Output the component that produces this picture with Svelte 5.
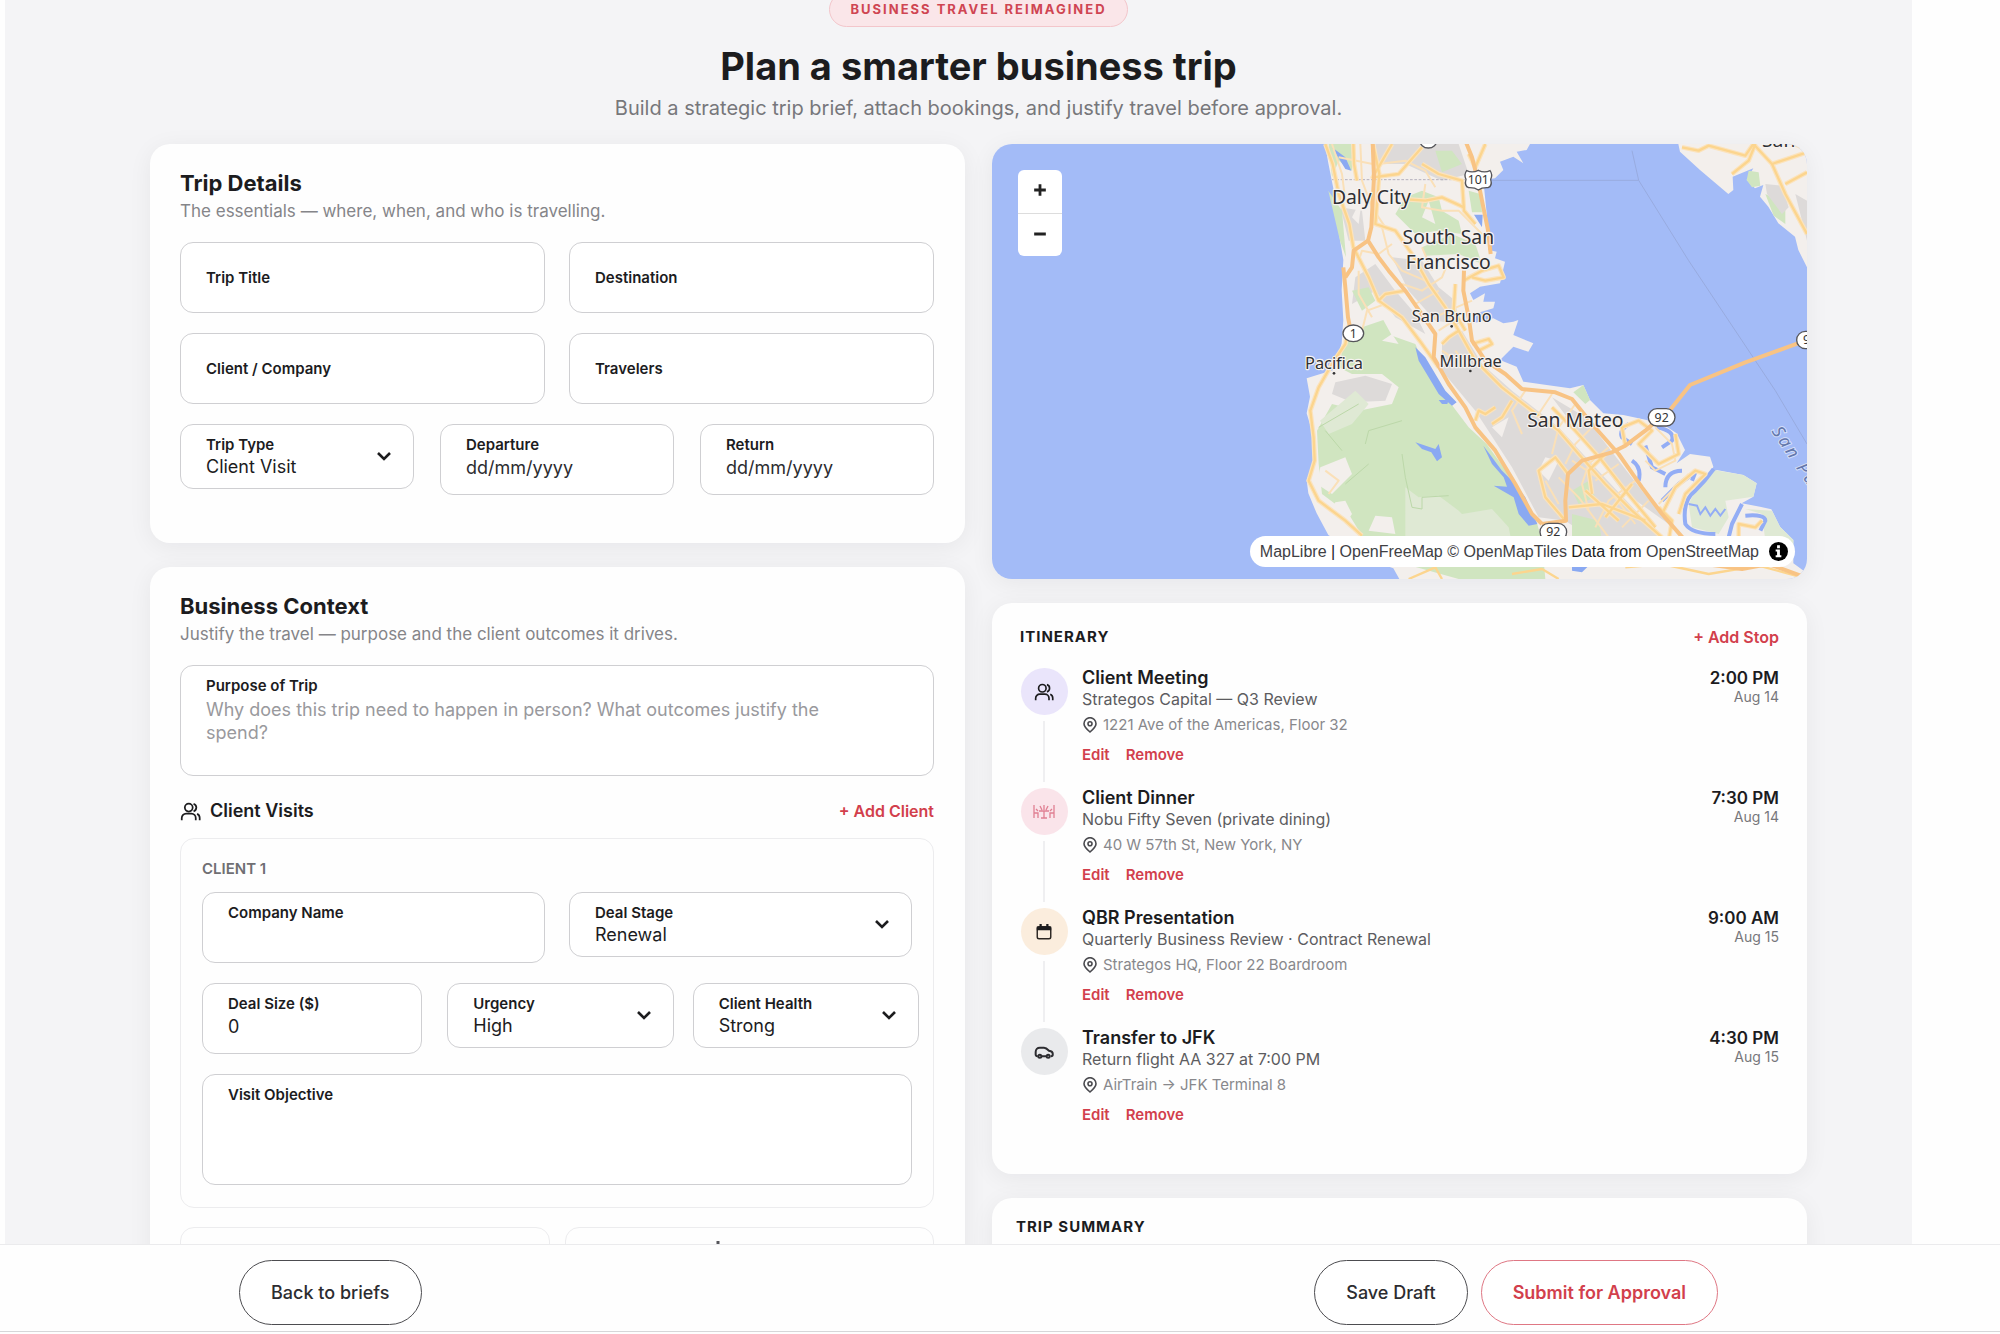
<script>
  let trip = {
    title: "",
    destination: "",
    company: "",
    travelers: "",
    type: "Client Visit",
    departure: "",
    returning: "",
    purpose: "",
  };

  let client = {
    name: "",
    stage: "Renewal",
    size: "0",
    urgency: "High",
    health: "Strong",
    objective: "",
  };

  const basics = [
    { key: "title", label: "Trip Title" },
    { key: "destination", label: "Destination" },
    { key: "company", label: "Client / Company" },
    { key: "travelers", label: "Travelers" },
  ];

  let stops = [
    {
      icon: "people",
      title: "Client Meeting",
      detail: "Strategos Capital — Q3 Review",
      place: "1221 Ave of the Americas, Floor 32",
      time: "2:00 PM",
      date: "Aug 14",
    },
    {
      icon: "dinner",
      title: "Client Dinner",
      detail: "Nobu Fifty Seven (private dining)",
      place: "40 W 57th St, New York, NY",
      time: "7:30 PM",
      date: "Aug 14",
    },
    {
      icon: "calendar",
      title: "QBR Presentation",
      detail: "Quarterly Business Review · Contract Renewal",
      place: "Strategos HQ, Floor 22 Boardroom",
      time: "9:00 AM",
      date: "Aug 15",
    },
    {
      icon: "car",
      title: "Transfer to JFK",
      detail: "Return flight AA 327 at 7:00 PM",
      place: "AirTrain → JFK Terminal 8",
      time: "4:30 PM",
      date: "Aug 15",
    },
  ];

  const removeStop = (stop) => {
    stops = stops.filter((s) => s !== stop);
  };

  // Roads, grouped by weight
  const highways = [
    "M1422 -5 L1440 40 L1458 110 L1474 190 L1488 258 L1496 330",
    "M1142 -5 L1146 100 L1138 250 L1128 290 L1160 340 L1190 380 L1240 440 L1275 490 L1330 570 L1325 640 L1370 720 L1420 790 L1450 850 L1510 920 L1570 1020 L1620 1110 L1650 1140",
    "M1416 380 L1414 440 L1430 520 L1440 590 L1480 650 L1540 690 L1590 735 L1690 745 L1740 765 L1800 840 L1880 930 L1950 1030 L2010 1110 L2080 1190",
    "M1054 370 L1060 430 L1068 520 L1076 560",
    "M1650 1140 L1722 1130 L1720 1070 L1728 990 L1770 950 L1860 925 L1900 905 L1960 860 L2000 825",
    "M2034 798 L2094 723 L2260 655 L2440 590",
    "M1128 290 L1085 320 L1080 370 L1060 400",
  ];
  const mainRoads = [
    "M1000 0 L1022 60 L1040 150 L1072 240 L1084 310 L1130 400 L1160 470 L1230 520 L1290 600 L1340 670",
    "M1084 0 L1086 60 L1095 110",
    "M1200 0 L1142 100 L1220 90 L1290 10",
    "M1142 -5 L1162 90 L1150 240 L1210 260 L1260 330 L1310 420 L1360 490 L1400 560 L1450 650 L1530 730 L1620 800 L1700 860 L1760 930 L1840 1020 L1920 1100 L2010 1180",
    "M1290 60 L1340 90 L1410 110 L1416 200 L1450 240",
    "M1480 0 L1450 70 L1430 30",
    "M1230 165 L1300 170 L1350 160 L1416 190",
    "M1070 545 L1060 600 L1020 660 L980 730 L955 800 L965 880 L968 950 L950 1010 L980 1070 L1060 1130 L1110 1175",
    "M1240 440 L1180 450 L1160 470",
    "M1350 600 L1370 580 L1400 560",
    "M1390 420 L1385 500 L1420 560",
    "M1440 600 L1490 585 L1500 600 L1460 620",
    "M1414 410 L1470 380 L1520 365 L1535 400 L1480 410 L1440 400",
    "M1680 790 L1750 860 L1830 950 L1900 1040 L1990 1150",
    "M1510 790 L1480 810 L1460 800 L1450 830",
    "M1560 770 L1530 820 L1500 840",
    "M1728 990 L1690 940 L1640 980 L1660 1060 L1720 1130",
    "M1800 1050 L1790 980 L1840 930",
    "M1840 1120 L1920 1020 M1780 1040 L1880 1130 M1730 1090 L1830 1080 L1960 1130",
    "M1900 905 L1890 850 L1940 830 L1980 860 L1940 900 L2000 960 L2060 930 L2050 870",
    "M2010 1110 L2050 1030 L2110 980 L2140 990 L2080 1050 L2060 1110",
    "M2030 1190 L2040 1130 L2000 1090",
    "M2240 1180 L2240 1140 L2290 1150 L2310 1130",
  ];
  const eastRoads = [
    "M2070 10 L2120 20 L2150 5 L2260 35 L2284 0 L2340 60 L2380 150 L2445 270",
    "M2290 0 L2270 50 L2220 90",
    "M2340 60 L2445 25 M2380 120 L2445 85 M2400 -5 L2430 10",
  ];
  const streets = [
    "M1040 40 L1142 60 M1020 0 L1050 90 L1060 170 M1105 0 L1110 110 L1140 190 L1180 250",
    "M1160 60 L1240 50 L1300 80 L1330 130 M1300 120 L1290 190 L1350 200 M1350 200 L1400 200 L1470 270",
    "M1170 250 L1190 330 L1230 380 L1300 410 M1200 300 L1160 330 L1110 320 L1100 350 M1100 380 L1100 450 L1140 520",
    "M1230 420 L1290 440 L1350 400 L1370 350 M1270 480 L1340 440 M1310 530 L1370 500 L1440 470 M1320 380 L1290 310",
    "M1400 520 L1340 560 M1380 640 L1350 620 M1420 660 L1390 620 M1110 560 L1125 500 L1180 480",
    "M1600 740 L1560 800 L1590 870 M1680 750 L1640 810 M1750 780 L1700 850 L1680 930 M1800 850 L1750 900 L1720 960",
    "M1850 910 L1790 960 L1770 1020 L1790 1100 M1880 960 L1810 1010 M1930 1010 L1850 1070 L1810 1150 M1970 1070 L1890 1150",
    "M1700 1000 L1760 1060 L1850 1180 M1660 1010 L1700 1080 M1740 950 L1830 1010 L1930 1140",
    "M1990 850 L2040 900 L2050 950 L1990 980 L1960 950 M2000 1080 L2090 990 M1000 980 L1040 1010 L1010 1050",
  ];
</script>

{#snippet chevron()}
  <svg class="chevron" viewBox="0 0 16 16" aria-hidden="true">
    <path d="M2 5 L8 11 L14 5" fill="none" stroke="#1c1c1e" stroke-width="2.6" />
  </svg>
{/snippet}

{#snippet people()}
  <svg viewBox="0 0 24 24" aria-hidden="true" fill="none" stroke="currentColor" stroke-width="2">
    <circle cx="10" cy="7.500" r="4.500" />
    <path d="M2 22v-2.500a5 5 0 0 1 5-5h6a5 5 0 0 1 5 5V22" />
    <path d="M15.500 3.200a4.500 4.500 0 0 1 0 8.600M19.500 14.700a5 5 0 0 1 3 4.500V22" />
  </svg>
{/snippet}

<div class="app">
  <main>
    <header class="hero">
      <span class="badge">BUSINESS TRAVEL REIMAGINED</span>
      <h1>Plan a smarter business trip</h1>
      <p>Build a strategic trip brief, attach bookings, and justify travel before approval.</p>
    </header>

    <div class="columns">
      <!-- Left column: the brief -->
      <div class="column">
        <section class="card details">
          <h2>Trip Details</h2>
          <p class="lead">The essentials — where, when, and who is travelling.</p>

          <div class="row two">
            {#each basics as item}
              <div class="field inline">
                <label for={item.key}>{item.label}</label>
                <input id={item.key} type="text" bind:value={trip[item.key]} />
              </div>
            {/each}
          </div>

          <div class="row three">
            <div class="field pick">
              <label for="type">Trip Type</label>
              <select id="type" bind:value={trip.type}>
                <option>Client Visit</option>
                <option>Conference</option>
              </select>
              {@render chevron()}
            </div>
            <div class="field">
              <label for="departure">Departure</label>
              <input id="departure" type="text" placeholder="dd/mm/yyyy" bind:value={trip.departure} />
            </div>
            <div class="field">
              <label for="return">Return</label>
              <input id="return" type="text" placeholder="dd/mm/yyyy" bind:value={trip.returning} />
            </div>
          </div>
        </section>

        <section class="card">
          <h2>Business Context</h2>
          <p class="lead">Justify the travel — purpose and the client outcomes it drives.</p>

          <div class="field area">
            <label for="purpose">Purpose of Trip</label>
            <textarea
              id="purpose"
              placeholder="Why does this trip need to happen in person? What outcomes justify the spend?"
              bind:value={trip.purpose}
            ></textarea>
          </div>

          <div class="visits-head">
            <h3>{@render people()} Client Visits</h3>
            <button class="link" type="button">+ Add Client</button>
          </div>

          <div class="client">
            <h4>CLIENT 1</h4>
            <div class="row two">
              <div class="field">
                <label for="name">Company Name</label>
                <input id="name" type="text" bind:value={client.name} />
              </div>
              <div class="field pick">
                <label for="stage">Deal Stage</label>
                <select id="stage" bind:value={client.stage}>
                  <option>Renewal</option>
                  <option>Discovery</option>
                </select>
                {@render chevron()}
              </div>
            </div>
            <div class="row deal">
              <div class="field">
                <label for="size">Deal Size ($)</label>
                <input id="size" type="text" inputmode="numeric" bind:value={client.size} />
              </div>
              <div class="field pick">
                <label for="urgency">Urgency</label>
                <select id="urgency" bind:value={client.urgency}>
                  <option>High</option>
                  <option>Low</option>
                </select>
                {@render chevron()}
              </div>
              <div class="field pick">
                <label for="health">Client Health</label>
                <select id="health" bind:value={client.health}>
                  <option>Strong</option>
                  <option>At Risk</option>
                </select>
                {@render chevron()}
              </div>
            </div>
            <div class="field area">
              <label for="objective">Visit Objective</label>
              <textarea id="objective" bind:value={client.objective}></textarea>
            </div>
          </div>

          <div class="stats">
            <div class="stat"></div>
            <div class="stat">
              <svg viewBox="0 0 24 24" aria-hidden="true" fill="none" stroke="#55555a" stroke-width="3">
                <path d="M12 0v24M18 6H9a4 4 0 0 0 0 7h6a4 4 0 0 1 0 7H6" />
              </svg>
            </div>
          </div>
        </section>
      </div>

      <!-- Right column: map, stops and summary -->
      <div class="column">
        <section class="map" aria-label="Map">
          <svg class="tiles" viewBox="0 0 2445 1305" preserveAspectRatio="xMidYMid slice">
            <rect width="2445" height="1305" fill="#a3bbf7" />

            <!-- Peninsula -->
            <path
              fill="#f3efec"
              d="M999 0 L1009 58 L1029 158 L1044 288 L1054 348 L1049 438 L1054 528 L1049 598 L1024 678 L985 690 L944 703 L954 758 L944 808 L959 858 L964 958 L944 1008 L949 1048 L974 1108 L1009 1173 L1110 1240 L1204 1273 L1222 1305 L2445 1305 L2439 1283 L2404 1258 L2404 1188 L2364 1148 L2344 1108 L2338 1096 L2304 1088 L2249 1078 L2284 1058 L2294 1018 L2254 993 L2174 978 L2154 998 L2164 968 L2154 938 L2094 930 L2054 958 L2079 918 L2054 868 L2024 848 L1964 828 L1894 813 L1834 808 L1794 768 L1774 723 L1734 733 L1664 723 L1594 713 L1574 668 L1524 648 L1564 608 L1609 623 L1624 598 L1564 573 L1579 528 L1564 533 L1534 538 L1504 523 L1444 538 L1454 508 L1504 493 L1509 473 L1474 473 L1479 448 L1444 468 L1434 448 L1464 428 L1524 418 L1539 353 L1509 343 L1514 323 L1489 318 L1489 258 L1484 208 L1474 108 L1509 103 L1534 78 L1524 53 L1564 38 L1594 58 L1574 23 L1604 18 L1614 0 Z"
            />
            <!-- Built-up areas -->
            <path
              fill="#dddad9"
              d="M1150 0 L1400 0 L1430 90 L1350 110 L1240 60 L1160 60 Z M1045 190 L1110 200 L1120 290 L1070 290 Z M1090 400 L1150 360 L1210 440 L1270 510 L1300 570 L1210 520 L1150 440 L1080 480 Z M1200 340 L1290 350 L1340 430 L1390 470 L1400 540 L1330 530 L1250 440 Z M1350 590 L1410 560 L1470 660 L1560 740 L1700 850 L1800 960 L1950 1120 L2010 1190 L1810 1190 L1720 1130 L1640 1120 L1560 970 L1450 800 L1350 680 Z M1030 715 L1120 695 L1200 720 L1180 770 L1080 775 L1020 750 Z M1680 760 L1780 820 L1950 1040 L2030 1140 L1890 1040 Z"
            />
            <!-- Parks and hills -->
            <path
              fill="#d0e5c0"
              d="M1055 600 L1110 550 L1174 528 L1200 575 L1270 600 L1300 670 L1370 770 L1430 850 L1484 900 L1564 1010 L1630 1120 L1650 1190 L1660 1305 L1400 1305 L1204 1250 L1110 1175 L1070 1110 L990 1050 L980 960 L975 860 L1020 780 L1100 800 L1200 780 L1220 730 L1170 690 L1080 690 L1040 670 Z M1240 160 L1290 140 L1340 160 L1350 200 L1400 230 L1410 270 L1340 260 L1270 270 L1210 210 Z M1380 270 L1450 300 L1470 360 L1400 330 L1300 335 L1290 310 Z M1330 20 L1380 20 L1410 60 L1350 85 Z M1080 440 L1130 430 L1150 470 L1110 500 Z M1430 140 L1465 150 L1470 205 L1440 205 Z M1010 0 L1080 0 L1080 80 L1040 50 L1020 100 Z M1740 1040 L1790 1010 L1810 1060 L1760 1080 Z M1740 1110 L1820 1130 L1830 1190 L1740 1190 Z M1744 745 L1774 723 L1794 768 L1780 780 Z M1009 140 L1050 200 L1062 340 L1044 290 Z"
            />
            <path
              fill="#dfe9d4"
              d="M1240 1030 L1280 1060 L1340 1055 L1400 1100 L1410 1110 L1500 1095 L1550 1150 L1560 1200 L1240 1200 Z M984 830 L1090 740 L1130 780 L1080 840 L1010 870 Z M2090 1080 L2120 1020 L2165 978 L2254 993 L2294 1018 L2284 1058 L2200 1070 L2210 1120 L2180 1170 L2100 1150 Z M2260 1095 L2340 1100 L2364 1148 L2404 1188 L2404 1240 L2320 1190 L2310 1110 Z"
            />
            <path
              fill="#f3efec"
              d="M985 970 L1060 940 L1080 990 L1020 1050 L975 1020 Z M1030 1075 L1060 1070 L1080 1110 L1060 1140 L1010 1110 Z M1170 590 L1220 600 L1200 570 Z M1500 850 L1550 820 L1530 880 Z M1150 1115 L1200 1120 L1210 1170 L1130 1160 Z M1310 170 L1330 240 L1290 220 Z M1110 160 L1100 240 L1080 220 Z M1660 940 L1700 950 L1670 1010 L1640 980 Z"
            />
            <path fill="none" stroke="#bcd8a9" stroke-width="3" d="M980 850 L1100 780 M1120 900 L1130 860 L1230 830 M1000 860 L1050 920 M1060 1020 L1130 960 M1230 930 L1240 1000 L1260 1090 L1290 1095 L1290 1060 L1370 1055" />

            <!-- Lakes, sloughs and creeks -->
            <path
              fill="#8aa9f2"
              d="M1270 610 L1300 640 L1330 690 L1360 740 L1394 775 L1380 785 L1340 750 L1310 700 L1280 650 Z M1270 895 L1330 915 L1340 900 L1350 940 L1335 952 L1318 925 L1290 915 Z M1474 905 L1500 940 L1530 980 L1570 1020 L1600 1060 L1636 1140 L1610 1145 L1580 1110 L1565 1060 L1505 1025 L1545 1028 L1535 1000 L1500 960 Z M1020 10 L1060 40 L1078 80 L1060 75 Z M1446 212 L1472 212 L1470 250 Z M1340 768 L1370 768 L1366 780 L1350 780 Z M1740 1260 L1790 1265 L1770 1285 L1740 1280 Z"
            />
            <path
              fill="none"
              stroke="#93adf5"
              stroke-width="12"
              stroke-linejoin="round"
              d="M1910 840 Q1880 860 1890 880 L1920 900 M1994 850 Q2050 860 2040 890 L2010 910 M1960 905 L1980 970 L2020 990 M1920 950 Q1950 970 1940 1010 M2070 980 Q2020 980 2020 1030 M2010 1070 L2060 1020 L2110 985 L2100 1010 M2165 975 Q2140 1010 2110 1040 Q2070 1070 2080 1140 Q2100 1170 2170 1170 M2250 1080 L2220 1140 L2210 1180 M2260 1115 Q2320 1110 2320 1130 L2305 1160"
            />
            <path fill="none" stroke="#93adf5" stroke-width="6" d="M2090 1080 L2115 1085 L2125 1110 L2140 1090 L2155 1115 L2170 1095 L2185 1115 L2200 1095" />

            <!-- East shore -->
            <path
              fill="#f3efec"
              d="M2059 0 L2064 23 L2124 78 L2209 150 L2224 138 L2222 98 L2284 73 L2264 108 L2289 133 L2314 123 L2304 158 L2329 188 L2359 238 L2409 278 L2419 318 L2445 370 L2445 0 Z"
            />
            <path fill="#d0e5c0" d="M2270 80 L2300 85 L2305 125 L2280 130 L2264 108 Z M2320 150 L2380 180 L2380 240 L2345 215 Z" />
            <path fill="#dddad9" d="M2320 120 L2370 125 L2390 190 L2370 210 L2325 150 Z M2410 150 L2445 170 L2445 290 Z" />

            <path class="boundary dashed" d="M1020 107 H1430" />
            <path class="boundary" d="M1500 109 H1940 L1920 20 M1940 109 L2090 350 L2250 590 L2350 740 L2445 900" />

            {#each streets as road}
              <path class="street" d={road} />
            {/each}
            {#each mainRoads.concat(eastRoads) as road}
              <path class="casing" d={road} />
            {/each}
            {#each mainRoads.concat(eastRoads) as road}
              <path class="road" d={road} />
            {/each}
            {#each highways as road}
              <path class="highway" d={road} />
            {/each}
            <path class="road" d="M1250 1305 L1330 1270 L1350 1305 M1560 1290 L1650 1275 L1700 1305 M1900 1270 L2010 1260 L2150 1290 L2300 1265 L2430 1300" />
            <path class="highway" d="M2140 1260 L2250 1275 L2330 1260 L2440 1300" />

            <!-- Route shields -->
            <g class="shield">
              <path d="M1424 80 Q1441 88 1459 79 Q1477 88 1494 80 Q1503 92 1496 106 Q1502 126 1488 131 Q1470 130 1459 138 Q1448 130 1430 131 Q1416 126 1422 106 Q1415 92 1424 80 Z" />
              <ellipse cx="1309" cy="-12" rx="26" ry="24" />
              <ellipse cx="1084" cy="568" rx="31" ry="25" />
              <rect x="1969" y="794" width="80" height="52" rx="26" />
              <rect x="1644" y="1138" width="80" height="52" rx="26" />
              <rect x="2414" y="562" width="80" height="52" rx="26" />
              <text x="1459" y="119">101</text>
              <text x="1084" y="581">1</text>
              <text x="2009" y="833">92</text>
              <text x="1684" y="1177">92</text>
              <text x="2454" y="601">92</text>
            </g>

            <!-- Places -->
            <g class="city">
              <text x="1138" y="180">Daly City</text>
              <text x="1369" y="300">South San</text>
              <text x="1369" y="375">Francisco</text>
              <text x="1750" y="850">San Mateo</text>
              <text x="2360" y="8">San</text>
            </g>
            <g class="town">
              <text x="1379" y="534">San Bruno</text>
              <text x="1436" y="670">Millbrae</text>
              <text x="1026" y="675">Pacifica</text>
            </g>
            <g fill="#333">
              <circle cx="1379" cy="547" r="4" />
              <circle cx="1435" cy="681" r="4" />
              <circle cx="1026" cy="688" r="4" />
            </g>
            <text class="bay" transform="translate(2338 862) rotate(56)">San Pablo</text>
          </svg>

          <div class="zoom">
            <button type="button" aria-label="Zoom in">
              <svg viewBox="0 0 12 12" aria-hidden="true"><path d="M6 1v10M1 6h10" /></svg>
            </button>
            <button type="button" aria-label="Zoom out">
              <svg viewBox="0 0 12 12" aria-hidden="true"><path d="M1 6h10" /></svg>
            </button>
          </div>

          <div class="attribution">
            <span>
              <a href="#maplibre">MapLibre</a> | <a href="#openfreemap">OpenFreeMap</a>
              <a href="#openmaptiles">© OpenMapTiles</a> Data from
              <a href="#openstreetmap">OpenStreetMap</a>
            </span>
            <svg viewBox="0 0 20 20" aria-hidden="true">
              <circle cx="10" cy="10" r="10" />
              <path fill="#fff" d="M8.500 3.500h3v3h-3zM7 8h4.500v6H13v2H7v-2h1.500v-4H7z" />
            </svg>
          </div>
        </section>

        <section class="card itinerary">
          <div class="itinerary-head">
            <h2 class="caps">ITINERARY</h2>
            <button class="link" type="button">+ Add Stop</button>
          </div>

          <ol>
            {#each stops as stop, index}
              <li>
                <div class="rail">
                  <span class="dot {stop.icon}">
                    {#if stop.icon === "people"}
                      {@render people()}
                    {:else if stop.icon === "dinner"}
                      <svg class="wide" viewBox="0 0 22 14" aria-hidden="true" fill="none" stroke="#e07f92" stroke-width="1.3">
                        <path d="M1 0v13M1 8h4v5M21 0v13M21 8h-4v5M11 6v7M8 13h6M6 6h10M7 1l2 4M11 0v5M15 1l-2 4M3 4l2 2M19 4l-2 2" />
                      </svg>
                    {:else if stop.icon === "calendar"}
                      <svg viewBox="0 0 20 20" aria-hidden="true">
                        <rect x="2.500" y="4" width="15" height="13.500" rx="2" fill="none" stroke="#2c2622" stroke-width="1.600" />
                        <path fill="#1c1c1e" d="M2 4h16v4H2zM5 1h2.500v4H5zM12.500 1H15v4h-2.500z" />
                      </svg>
                    {:else}
                      <svg viewBox="0 0 24 24" aria-hidden="true" fill="none" stroke="#2c2c30" stroke-width="2.400">
                        <path d="M4.500 17H4a2 2 0 0 1-2-2v-3c0-3 2-5 5-5h5c2.500 0 4 1.500 6 3.500 3 .5 4.500 1.500 4.500 3.500v1a2 2 0 0 1-2 2H20M9.500 17h5" />
                        <circle cx="7" cy="17" r="1.800" />
                        <circle cx="17" cy="17" r="1.800" />
                      </svg>
                    {/if}
                  </span>
                  {#if index < stops.length - 1}
                    <span class="line"></span>
                  {/if}
                </div>

                <div class="body">
                  <h3>{stop.title}</h3>
                  <p class="detail">{stop.detail}</p>
                  <p class="place">
                    <svg viewBox="0 0 14 16" aria-hidden="true" fill="none" stroke="#4a4a4f" stroke-width="1.600">
                      <path d="M7 15C3.500 12 1 9.500 1 6.700a6 6 0 0 1 12 0C13 9.500 10.500 12 7 15z" />
                      <circle cx="7" cy="6.700" r="2" />
                    </svg>
                    {stop.place}
                  </p>
                  <div class="actions">
                    <button class="link" type="button">Edit</button>
                    <button class="link" type="button" on:click={() => removeStop(stop)}>Remove</button>
                  </div>
                </div>

                <div class="when">
                  <strong>{stop.time}</strong>
                  <span>{stop.date}</span>
                </div>
              </li>
            {/each}
          </ol>
        </section>

        <section class="card summary">
          <h2 class="caps">TRIP SUMMARY</h2>
        </section>
      </div>
    </div>
  </main>

  <footer>
    <button class="pill" type="button">Back to briefs</button>
    <div class="right">
      <button class="pill" type="button">Save Draft</button>
      <button class="pill primary" type="button">Submit for Approval</button>
    </div>
  </footer>
</div>

<style>
  :global(body) {
    background: #fefefe;
  }

  * {
    box-sizing: border-box;
  }

  .app {
    display: flex;
    flex-direction: column;
    height: 100vh;
    padding-bottom: 2px;
    color: #1c1c1e;
    font-family: Inter, "Liberation Sans", sans-serif;
  }

  h1,
  h2,
  h3,
  h4,
  p,
  ol {
    margin: 0;
    padding: 0;
  }

  button,
  input,
  select,
  textarea {
    font-family: inherit;
    color: inherit;
  }

  main {
    flex: 1;
    min-height: 0;
    overflow: hidden;
    margin: 0 88px 0 5px;
    padding: 0 105px 0 145px;
    background: #f4f4f6;
  }

  /* Hero */
  .hero {
    display: flex;
    flex-direction: column;
    align-items: center;
    margin-top: -8px;
    height: 152px;
  }

  .badge {
    padding: 0 20px;
    border: 1px solid #f3c6cb;
    border-radius: 18px;
    background: #fae6e9;
    color: #cf4552;
    font-size: 13px;
    font-weight: 700;
    line-height: 33px;
    letter-spacing: 2px;
  }

  h1 {
    margin-top: 15px;
    font-size: 38px;
    font-weight: 700;
    line-height: 48px;
  }

  .hero p {
    margin-top: 4px;
    color: #77777b;
    font-size: 20px;
    line-height: 28px;
  }

  .columns {
    display: grid;
    grid-template-columns: 1fr 1fr;
    align-items: start;
    gap: 27px;
  }

  .column {
    display: grid;
    gap: 24px;
  }

  .card {
    padding: 26px 31px 48px 30px;
    border-radius: 20px;
    background: #fefefe;
    box-shadow: 0 4px 24px rgba(20, 20, 40, 0.06);
  }

  h2 {
    font-size: 22px;
    font-weight: 700;
    line-height: 26px;
  }

  .lead {
    margin: 4px 0 20px;
    color: #858589;
    font-size: 17px;
    line-height: 22px;
  }

  /* Form fields */
  .row {
    display: grid;
    align-items: start;
    gap: 20px 24px;
    margin-bottom: 20px;
  }

  .two {
    grid-template-columns: 1fr 1fr;
  }

  .three {
    grid-template-columns: 1fr 1fr 1fr;
    column-gap: 26px;
    margin-bottom: 0;
  }

  .deal {
    grid-template-columns: 1fr 1fr 1fr;
    column-gap: 19px;
    margin-right: -7px;
  }

  .deal .field:first-child {
    margin-right: 6px;
  }

  .field {
    position: relative;
    display: flex;
    flex-direction: column;
    height: 71px;
    padding: 10px 25px;
    border: 1px solid #cfcfd2;
    border-radius: 13px;
    background: #fff;
  }

  .inline {
    flex-direction: row;
    align-items: center;
    gap: 12px;
  }

  .pick {
    height: 65px;
  }

  .area {
    height: 111px;
  }

  label {
    font-size: 15px;
    font-weight: 600;
    line-height: 20px;
  }

  input,
  select,
  textarea {
    width: 100%;
    min-width: 0;
    padding: 0;
    border: 0;
    outline: 0;
    background: none;
    font-size: 18px;
    line-height: 23px;
    appearance: none;
    resize: none;
  }

  input {
    flex: 1;
  }

  .field:not(.inline) input {
    flex: none;
    height: 24px;
  }

  textarea {
    flex: 1;
    overflow: hidden;
    padding: 2px 40px 0 0;
  }

  input::placeholder {
    color: #2c2c30;
    opacity: 1;
  }

  textarea::placeholder {
    color: #99999d;
    opacity: 1;
  }

  .chevron {
    position: absolute;
    top: 23px;
    right: 21px;
    width: 16px;
    height: 16px;
    pointer-events: none;
  }

  .link {
    padding: 0;
    border: 0;
    background: none;
    color: #d23f4c;
    font-size: 16px;
    font-weight: 600;
    line-height: 20px;
    cursor: pointer;
  }

  .visits-head,
  .itinerary-head {
    display: flex;
    align-items: center;
    justify-content: space-between;
  }

  .visits-head {
    margin: 23px 0 15px;
  }

  .visits-head h3 {
    display: flex;
    align-items: center;
    gap: 9px;
    font-size: 18px;
    font-weight: 600;
    line-height: 24px;
  }

  .visits-head svg {
    width: 21px;
    height: 21px;
  }

  .client {
    padding: 20px 21px 22px;
    border: 1px solid #ececee;
    border-radius: 14px;
  }

  .client h4 {
    margin-bottom: 13px;
    color: #6f6f73;
    font-size: 15px;
    font-weight: 600;
    line-height: 20px;
  }

  .stats {
    display: grid;
    grid-template-columns: 1fr 1fr;
    gap: 15px;
    margin-top: 19px;
  }

  .stat {
    height: 100px;
    padding: 13px 140px;
    border: 1px solid #ececee;
    border-radius: 14px;
  }

  .stat svg {
    width: 24px;
    height: 24px;
  }

  /* Map */
  .map {
    position: relative;
    overflow: hidden;
    height: 435px;
    border-radius: 20px;
    box-shadow: 0 4px 24px rgba(20, 20, 40, 0.06);
  }

  .tiles {
    display: block;
    width: 100%;
    height: 100%;
    font-family: "Noto Sans", sans-serif;
    text-anchor: middle;
  }

  .street,
  .casing,
  .road,
  .highway,
  .boundary {
    fill: none;
    stroke-linejoin: round;
  }

  .street {
    stroke: #fae0b8;
    stroke-width: 6;
  }

  .casing {
    stroke: #fbe3bd;
    stroke-width: 14;
  }

  .road {
    stroke: #fcd58e;
    stroke-width: 7;
  }

  .highway {
    stroke: #f8c384;
    stroke-width: 12;
  }

  .boundary {
    stroke: #98abdf;
    stroke-width: 3;
  }

  .dashed {
    stroke: #b5b0bd;
    stroke-dasharray: 8 5;
  }

  .shield {
    fill: #fff;
    stroke: #55555a;
    stroke-width: 4;
  }

  .shield text {
    fill: #333;
    stroke: none;
    font-size: 37px;
  }

  .city,
  .town {
    fill: #2f2f33;
    stroke: #f6f3f0;
    stroke-width: 7;
    stroke-linejoin: round;
    paint-order: stroke;
    font-size: 58px;
  }

  .town {
    font-size: 49px;
  }

  .bay {
    fill: #6377ab;
    stroke: #d3def9;
    stroke-width: 6;
    paint-order: stroke;
    font-size: 52px;
    font-style: italic;
    letter-spacing: 8px;
    text-anchor: start;
  }

  .zoom {
    position: absolute;
    top: 26px;
    left: 26px;
    display: grid;
    overflow: hidden;
    border-radius: 6px;
    background: #fff;
  }

  .zoom button {
    width: 44px;
    height: 43px;
    padding: 0;
    border: 0;
    background: none;
  }

  .zoom button + button {
    border-top: 1px solid #ddd;
  }

  .zoom svg {
    width: 14px;
    height: 14px;
    fill: none;
    stroke: #222;
    stroke-width: 2.4;
  }

  .attribution {
    position: absolute;
    right: 12px;
    bottom: 12px;
    display: flex;
    align-items: center;
    gap: 10px;
    padding: 0 7px 0 10px;
    border-radius: 16px;
    background: #fff;
    font-family: "Liberation Sans", sans-serif;
    font-size: 16px;
    line-height: 31px;
  }

  .attribution a {
    color: #404044;
    text-decoration: none;
  }

  .attribution svg {
    width: 19px;
    height: 19px;
  }

  /* Itinerary */
  .itinerary {
    padding: 24px 28px 26px;
  }

  .caps {
    font-size: 15px;
    font-weight: 700;
    line-height: 20px;
    letter-spacing: 1px;
  }

  ol {
    margin-top: 21px;
    list-style: none;
  }

  li {
    display: flex;
    min-height: 120px;
  }

  .rail {
    display: flex;
    flex-direction: column;
    align-items: center;
    width: 48px;
    margin-right: 14px;
  }

  .dot {
    display: flex;
    align-items: center;
    justify-content: center;
    width: 47px;
    height: 47px;
    border-radius: 50%;
    background: #eae5fb;
  }

  .dot svg {
    width: 20px;
    height: 20px;
  }

  .dot .wide {
    width: 22px;
    height: 14px;
  }

  .dot.dinner {
    background: #fae4ea;
  }

  .dot.calendar {
    background: #fbeddd;
  }

  .dot.calendar svg {
    width: 18px;
    height: 18px;
  }

  .dot.car {
    background: #e9eaec;
  }

  .line {
    flex: 1;
    width: 2px;
    margin: 6px 0;
    background: #efeff1;
  }

  .body {
    flex: 1;
  }

  .body h3 {
    font-size: 18px;
    font-weight: 600;
    line-height: 20px;
  }

  .detail {
    color: #5c5c60;
    font-size: 16px;
    line-height: 22px;
  }

  .place {
    display: flex;
    align-items: center;
    gap: 6px;
    margin: 5px 0 10px;
    padding-left: 1px;
    color: #88888c;
    font-size: 15px;
    line-height: 20px;
  }

  .place svg {
    width: 14px;
    height: 16px;
  }

  .actions {
    display: flex;
    gap: 16px;
  }

  .actions .link {
    font-size: 15px;
  }

  .when {
    display: flex;
    flex-direction: column;
    text-align: right;
  }

  .when strong {
    font-size: 17px;
    font-weight: 600;
    line-height: 20px;
  }

  .when span {
    color: #77777b;
    font-size: 14px;
    line-height: 18px;
  }

  .summary {
    padding: 19px 24px 80px;
  }

  /* Footer */
  footer {
    display: flex;
    align-items: center;
    justify-content: space-between;
    height: 88px;
    padding: 8px 282px 0 239px;
    border-top: 1px solid #ebebed;
    border-bottom: 1px solid #d6d6d8;
    background: #fefefe;
  }

  .right {
    display: flex;
    gap: 13px;
  }

  .pill {
    height: 65px;
    padding: 0 31px;
    border: 1px solid #4c4c50;
    border-radius: 33px;
    background: #fff;
    color: #2c2c30;
    font-size: 18px;
    font-weight: 500;
  }

  .primary {
    border-color: #df7784;
    color: #d23f4c;
    font-weight: 600;
  }
</style>
